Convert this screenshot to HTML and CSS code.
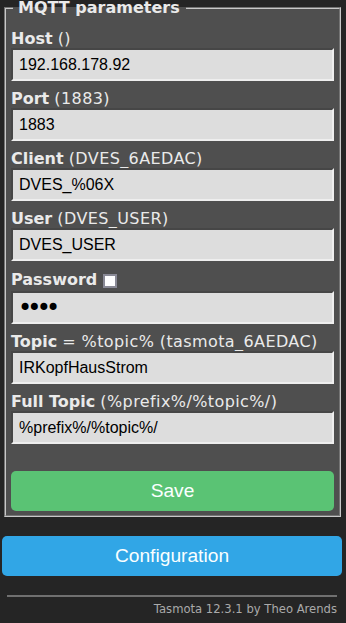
FILE: index.html
```html
<!DOCTYPE html>
<html lang="en">
<head>
    <meta charset="UTF-8">
    <meta name="viewport" content="width=device-width, initial-scale=1.0">
    <title>Tasmota - Configure MQTT</title>
    <link rel="stylesheet" href="styles.css">
</head>
<body>
    <div class="main">
        <fieldset class="params">
            <legend>MQTT parameters</legend>
            <form class="fields" onsubmit="return false">
                <div class="field">
                    <label><b>Host</b> <span class="hint">()</span></label>
                    <input type="text" value="192.168.178.92">
                </div>
                <div class="field">
                    <label><b>Port</b> <span class="hint">(1883)</span></label>
                    <input type="text" value="1883">
                </div>
                <div class="field">
                    <label><b>Client</b> <span class="hint">(DVES_6AEDAC)</span></label>
                    <input type="text" value="DVES_%06X">
                </div>
                <div class="field">
                    <label><b>User</b> <span class="hint">(DVES_USER)</span></label>
                    <input type="text" value="DVES_USER">
                </div>
                <div class="field">
                    <label class="pw-label"><b>Password</b> <input type="checkbox" class="show-pw"></label>
                    <input type="password" class="pw" value="pass">
                </div>
                <div class="field">
                    <label><b>Topic</b> <span class="hint">= %topic% (tasmota_6AEDAC)</span></label>
                    <input type="text" value="IRKopfHausStrom">
                </div>
                <div class="field">
                    <label><b>Full Topic</b> <span class="hint">(%prefix%/%topic%/)</span></label>
                    <input type="text" value="%prefix%/%topic%/">
                </div>
                <button class="btn save">Save</button>
            </form>
        </fieldset>
        <button class="btn config">Configuration</button>
        <hr class="rule">
        <div class="footer">Tasmota 12.3.1 by Theo Arends</div>
    </div>
</body>
</html>
```

FILE: styles.css
```css
body {
    margin: 0;
    background: #252525;
    color: #eaeaea;
    font-family: "DejaVu Sans", Verdana, sans-serif;
    font-size: 16px;
}
.main {
    padding: 0 4px 0 2px;
}
.params {
    margin: -2px 1px 0 2px;
    padding: 0 5px 4px 5px;
    background: #4f4f4f;
    border: 2px groove #c8c8c8;
}
.params legend {
    font-weight: bold;
    line-height: 19px;
    padding: 0 6px 0 5px;
    margin-left: 2px;
}
.fields {
    display: flex;
    flex-direction: column;
    padding-top: 12px;
}
.field {
    display: flex;
    flex-direction: column;
    margin-bottom: 8px;
}
.field label {
    line-height: 19px;
    height: 19px;
    white-space: nowrap;
}
.hint {
    letter-spacing: 0.4px;
}
.field .pw-label {
    height: 22px;
    line-height: 22px;
    display: flex;
    align-items: center;
}
.field input[type="text"],
.field input[type="password"] {
    height: 33px;
    box-sizing: border-box;
    padding: 5px 6px;
    background: #dddddd;
    color: #000;
    font-family: "Liberation Sans", Arial, sans-serif;
    font-size: 16px;
    border: 2px inset #eeeeee;
    border-top-color: #9a9a9a;
    border-left-color: #9a9a9a;
    border-right-color: #eeeeee;
    border-bottom-color: #eeeeee;
    outline: none;
}
.field input.pw {
    font-family: "DejaVu Sans", sans-serif;
    font-size: 24px;
    letter-spacing: -4.8px;
    padding: 0 5px;
}
.show-pw {
    appearance: none;
    width: 14px;
    height: 14px;
    margin: 2px 0 0 6px;
    background: #fff;
    border: 2px solid #8a8a96;
    box-sizing: border-box;
}
.btn {
    display: block;
    width: 100%;
    border: 0;
    border-radius: 5px;
    color: #faffff;
    font-family: "Liberation Sans", Arial, sans-serif;
    font-size: 19.2px;
    line-height: 40px;
    height: 40px;
    padding: 0;
    cursor: pointer;
}
.save {
    margin-top: 19px;
    background: #5ac374;
}
.config {
    margin-top: 19px;
    background: #31a6e6;
}
.rule {
    margin: 19px 5px 0 5px;
    border: 0;
    border-top: 2px solid #707070;
}
.footer {
    text-align: right;
    font-size: 11.6px;
    color: #aaaaaa;
    padding: 5px 5px 0 0;
}
```
